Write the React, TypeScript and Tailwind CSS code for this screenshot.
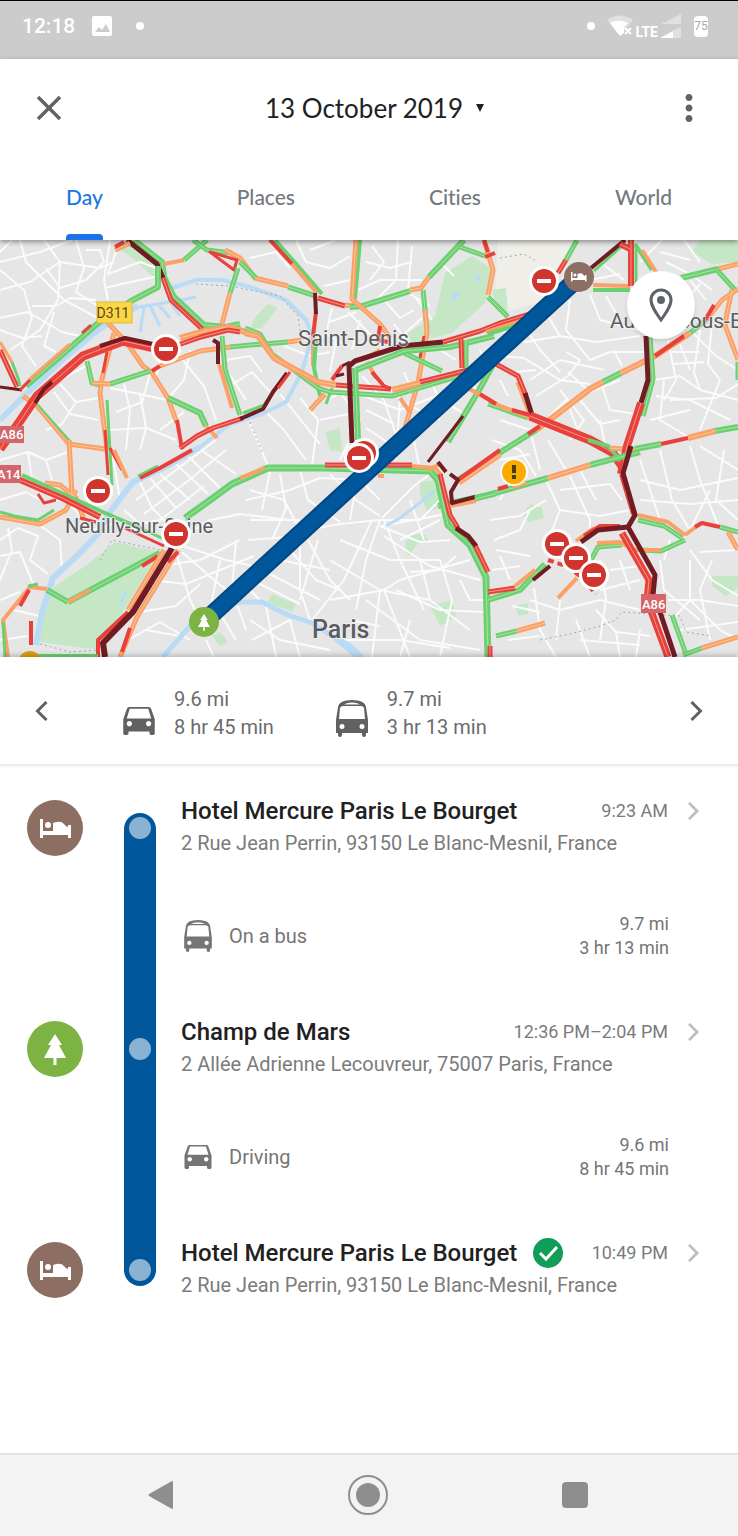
import type { ReactNode } from "react"
import { MdClose, MdMoreVert } from "react-icons/md"

const G = "#69d172"
const O = "#fba066"
const R = "#e8413b"
const D = "#701c22"

// minor streets, drawn in white under the traffic layer
const streets = [
  "M0 262 40 252 72 240M20 240 26 262 64 300 98 318M0 290 30 282 60 262 100 268 114 262",
  "M44 240 60 262 58 300 40 330 10 350M0 318 28 312 62 332 80 336M76 240 84 268 76 292 98 306",
  "M0 270 24 290 32 318 22 346 36 366M32 306 56 306 70 298 96 300M110 240 104 280 108 300",
  "M116 252 108 274 140 262 156 268M104 288 140 280 158 276M46 268 60 288 86 280 104 262",
  "M54 312 44 346 56 352M12 240 0 252M86 250 100 250 104 262M0 330 22 338 42 336",
  "M40 400 60 380 86 366M60 384 76 402 98 398M76 402 62 424 46 430M98 420 70 414 54 392",
  "M110 388 140 394 166 400M116 412 142 402 150 374M108 430 146 428 176 440M140 394 146 428 140 450",
  "M124 384 130 410 126 450M156 376 164 350M176 352 204 386 216 420M190 350 184 380 170 396",
  "M226 360 250 356 262 372M230 386 252 372 270 392M184 412 160 430M228 372 246 400",
  "M0 460 28 452 46 460 68 452M0 500 26 492 44 502 66 500M28 452 32 480M46 460 52 480",
  "M0 540 18 528 38 536 30 560 48 574M0 556 20 552 34 586M38 524 60 540 62 570M8 528 12 550 0 580",
  "M0 600 20 592M14 610 40 616M0 640 28 636M72 506 92 530 112 524M112 450 120 500",
  "M140 482 152 508 170 526M150 478 176 508M160 474 190 500M176 464 208 494M188 456 220 488M198 448 236 474",
  "M136 500 176 470 216 440M144 514 184 484 226 450M158 522 204 486M124 510 140 524 160 520",
  "M178 540 210 520 240 514 290 520M180 545 226 560 270 570M182 552 214 580 240 600M176 552 190 600 196 612",
  "M150 580 186 584 220 570 254 556M160 566 200 560 240 540M140 612 176 606 200 584M146 630 180 636",
  "M128 640 160 622 190 640M206 640 214 657M220 560 212 600 236 640M236 540 232 590 246 630",
  "M250 258 276 252 290 268M296 240 306 262 330 268 350 256M310 250 336 240M366 262 390 268 412 262",
  "M372 246 384 262 370 280M398 240 396 280 376 300M412 246 408 290M324 286 350 280M358 290 380 280 422 280",
  "M332 308 326 334 348 346M348 312 372 336M330 322 356 312M300 330 312 344M384 300 400 318 414 310M410 294 430 306",
  "M360 320 352 350M414 296 432 320M394 324 408 342M440 262 454 276M422 318 404 334",
  "M330 352 310 356 284 346M336 340 330 372M362 376 384 400 398 440M372 372 406 404 440 420M340 392 360 420 340 460",
  "M300 398 318 420 312 466M264 410 284 430 306 460M250 424 270 470M280 394 320 444M326 400 348 390M320 420 348 414",
  "M400 398 396 460M364 396 400 410 436 396M430 380 440 400 462 412M434 400 412 440M420 470 414 440",
  "M440 350 456 360M480 350 486 366M404 372 410 386M470 384 486 396M366 410 394 424M366 428 390 444",
  "M500 330 526 342 560 336 596 342 640 336M520 320 540 350 560 372M544 310 560 336M570 300 566 330 590 360",
  "M590 294 600 320 640 330M496 356 524 358 560 380 590 384M530 380 560 360 604 370M536 396 568 376 580 360 566 352",
  "M606 296 620 320M568 372 590 392 620 380M580 400 600 424 620 420M548 418 566 400 578 430M560 390 584 420 570 440",
  "M600 380 610 410 636 414M590 360 610 352 644 352M614 350 622 366M500 380 508 396M536 370 516 372",
  "M600 262 624 280M590 280 620 274M640 262 662 240M660 252 690 260M684 240 700 262M666 262 690 274 712 290",
  "M690 280 706 300M700 284 690 296M668 340 676 380 664 400M680 344 690 370M672 352 700 352M674 364 704 362",
  "M700 330 694 372 700 390M712 324 708 364 720 380M690 330 716 356 738 370M654 380 680 376 700 390 738 400",
  "M656 396 690 400 730 420M664 380 660 420 690 438M650 420 690 410M670 400 716 398 738 384M720 380 700 430",
  "M500 420 530 430 540 470M492 440 520 450 536 476M548 440 566 470M560 424 590 440M500 460 530 454M600 420 606 450",
  "M440 500 420 520 380 520 340 524 296 532M380 520 366 560 356 610M384 520 400 560 424 610M372 520 344 580 312 620",
  "M382 526 446 514M380 500 360 480 320 478M382 518 414 486 430 474M380 526 420 542 450 540M384 536 430 566 480 580",
  "M300 470 308 500 340 522M330 474 356 500 380 516M358 474 350 520M250 490 284 500 300 530M270 472 262 510",
  "M246 500 290 490 320 478M280 474 286 508 272 540M250 520 300 520M248 540 300 536M308 540 330 580 350 600",
  "M290 550 316 580 340 590M300 540 300 590 310 620M280 560 330 570M266 572 320 600M256 582 300 604M318 540 300 600",
  "M340 540 390 560 440 560M330 560 380 590 430 600M330 600 384 590 400 580 470 560M380 590 372 657M384 590 410 657",
  "M366 600 420 640 480 650M396 590 440 610 484 612M410 620 400 657M420 560 430 600 470 630M440 560 452 600 440 657",
  "M250 620 280 640 330 650M252 640 290 620M266 606 276 657M290 620 300 657M400 540 440 520M410 500 424 540",
  "M340 640 400 640 450 648M350 620 380 626M456 556 440 570 410 572M460 580 470 600 484 600M240 580 260 600",
  "M494 540 520 530 530 510M490 520 520 516 546 500M500 500 510 480M546 480 560 510 600 516 630 510M580 470 596 500",
  "M560 510 550 536M560 490 610 484 622 500M570 476 590 520 590 534M496 550 530 556M500 556 510 580M492 570 520 566",
  "M530 600 560 610 600 600 640 610M534 588 540 630 556 657M560 600 556 640M600 560 606 600 600 640M620 560 630 590",
  "M596 610 616 632 650 636M508 640 540 636M576 620 590 657M600 590 640 580M540 612 512 606M610 570 640 566",
  "M640 480 680 490 738 478M640 500 690 504 738 500M660 450 672 500 690 530M690 446 700 480 720 530M640 460 660 520",
  "M700 446 738 470M710 490 690 530M724 450 716 500 738 520M660 560 664 590 700 620M690 550 712 580 738 596",
  "M670 540 664 560M668 600 700 600 738 606M690 560 690 600 672 620M712 560 700 590 710 640M680 630 738 622",
  "M738 550 700 552M690 600 720 630 738 640M640 630 636 657M616 632 620 657M580 640 640 645",
]

const parks = [
  "M445 273 472 256 492 269 485 303 452 333 412 343 408 333 435 316Z",
  "M130 240 152 262 156 280 146 270 130 256 120 250Z",
  "M254 318 268 304 278 308 262 328 250 330Z",
  "M492 290 506 288 508 314 498 312Z",
  "M700 240H738V262L712 264 692 252Z",
  "M115 542 160 552 123 612 100 650 40 642 38 625 50 590 67 578 87 565Z",
  "M325 432 340 428 342 452 330 450Z",
  "M420 482 436 480 442 506 428 512 420 496Z",
  "M405 546Q408 532 424 534L430 542Q414 542 412 552L408 556Z",
  "M272 594 296 604 292 612 268 602Z",
  "M430 606 452 600 456 616 440 626Z",
  "M522 514 530 504 542 508 544 518 528 522Z",
  "M712 576 738 576V588L726 596 712 586Z",
  "M516 606 528 603 528 614 518 616Z",
  "M212 636 220 632 228 642 220 646Z",
]

const water = [
  { d: "M0 420 22 398 60 362 98 330 138 306", w: 6 },
  { d: "M133 308 170 302 196 297M144 308 140 332M150 306 160 326M158 304 170 318M170 302 180 316", w: 3 },
  { d: "M172 288 196 280 222 280 250 287 286 300 306 320 312 336 302 372 286 402 262 414 230 424 200 447", w: 4 },
  { d: "M200 447 165 467 133 482 110 512 97 535 80 553 53 578 42 612 36 645", w: 6 },
  { d: "M163 657 190 626 210 610 240 602 262 602 288 615 312 623 335 638 358 657", w: 5 },
  { d: "M386 526 400 518 434 492M120 606 126 592", w: 3 },
  { d: "M476 280 480 276M452 300 458 292M340 640 350 646 362 657", w: 5 },
]

// [colour, width, path]
const traffic: [string, number, string][] = [
  [G, 6, "M134 240 162 262 164 277 174 297 204 325 226 327 240 324"],
  [D, 5, "M127 240 157 264 163 278"],
  [R, 5, "M163 278 171 300 201 328V337"],
  [O, 5, "M115 250 130 243"],
  [R, 4, "M115 247 124 242"],
  [O, 4, "M164 264 184 260"],
  [G, 5, "M184 260 207 240"],
  [G, 6, "M158 266 158 287 131 301 97 324 62 355 26 386"],
  [O, 3, "M70 344 32 377 22 388"],
  [R, 3, "M82 333 91 325"],
  [G, 5, "M193 240 207 250 232 253"],
  [O, 5, "M225 250 240 258 255 278 288 286"],
  [R, 3, "M210 252 234 270 237 260Z"],
  [G, 5, "M238 268 230 293"],
  [O, 5, "M230 293 222 324"],
  [R, 5, "M0 350 17 387"],
  [O, 3, "M0 342 12 362"],
  [G, 3, "M12 362 18 378 20 386"],
  [D, 3, "M0 387 22 390"],
  [R, 3, "M20 390 30 380"],
  [O, 5, "M23 396 37 406 69 444 105 449"],
  [G, 2, "M37 404 70 441"],
  [O, 5, "M108 323 127 343 143 366 152 373 168 398 177 423"],
  [R, 4, "M177 420 182 449"],
  [O, 5, "M114 333 102 379 100 393 107 449"],
  [R, 3, "M107 352 103 373"],
  [R, 3, "M105 430 108 475"],
  [G, 3, "M107 400 112 485"],
  [G, 5, "M87 361 92 383 100 385M110 384 150 371"],
  [O, 5, "M92 383 110 384M160 366 200 351 230 347"],
  [R, 4, "M152 371 160 366"],
  [G, 5, "M230 347 250 345 288 342"],
  [O, 5, "M288 342 302 340"],
  [G, 6, "M168 398 200 413 206 426"],
  [O, 4, "M206 426 217 438"],
  [R, 5, "M180 448 197 436 213 428 243 418"],
  [G, 3, "M243 413 264 405 274 390"],
  [D, 4, "M240 419 263 409 273 392 287 373"],
  [R, 3, "M278 388 290 372"],
  [G, 5, "M222 336 225 369 240 415"],
  [O, 4, "M219 364 232 408"],
  [D, 4, "M213 340 218 343V364"],
  [R, 9, "M0 449 20 421 37 396 83 356 123 341 155 348"],
  [D, 4, "M100 346 125 338 153 344M35 403 44 389 52 382"],
  [O, 6, "M180 338 205 331 228 327 246 332"],
  [R, 5, "M178 345 201 337 228 330 240 332"],
  [G, 4, "M275 240 298 266 322 294"],
  [R, 4, "M270 240 292 264"],
  [O, 4, "M292 264 317 293"],
  [G, 5, "M240 262 256 278M288 287 316 296"],
  [R, 5, "M318 298 345 306"],
  [O, 5, "M345 305 356 306M410 290 421 288 429 277"],
  [G, 6, "M350 307 362 306 410 291M429 277 464 240"],
  [G, 4, "M360 240 355 299"],
  [O, 5, "M356 240 352 299 380 324 390 338"],
  [R, 4, "M316 312 313 336M380 326 378 340 388 342"],
  [O, 4, "M313 336 313 366"],
  [G, 4, "M316 340 314 368 320 396"],
  [D, 4, "M315 293 316 314"],
  [O, 5, "M310 410 325 394"],
  [G, 3, "M332 388 326 404"],
  [G, 5, "M423 290 427 329"],
  [O, 5, "M425 310 427 332 418 383 405 428"],
  [R, 3, "M424 336 420 358"],
  [G, 5, "M245 328 260 334 272 354 318 388 330 392 392 396 466 374"],
  [O, 6, "M245 333 258 336 274 358 318 382 336 385M392 390 420 383"],
  [R, 5, "M336 385 391 389M420 382 468 370"],
  [O, 4, "M367 362 376 378M366 358 380 350"],
  [R, 4, "M372 372 384 386 391 389M332 380 342 366"],
  [G, 5, "M402 352 442 371"],
  [G, 6, "M356 370 405 351 450 347 494 336"],
  [G, 6, "M355 368 358 440"],
  [D, 5, "M352 443 349 366 355 361 402 346 443 342"],
  [D, 3, "M336 376 344 374M342 366 350 362"],
  [R, 5, "M443 342 480 331 500 323 530 314"],
  [O, 4, "M486 332 530 318"],
  [G, 4, "M488 334 528 322 566 296"],
  [G, 5, "M466 340V368"],
  [R, 5, "M461 339 462 368"],
  [O, 4, "M400 398 410 412"],
  [G, 6, "M500 352 478 392 448 442"],
  [D, 3, "M463 416 428 462"],
  [O, 5, "M484 240 493 270 488 295"],
  [G, 5, "M488 297 508 317M460 247 485 256"],
  [R, 4, "M484 240 488 252M485 257 495 253"],
  [G, 5, "M577 240 566 260"],
  [R, 5, "M566 260 558 273M538 306 552 298"],
  [G, 3, "M624 244 594 271"],
  [D, 4, "M625 240 591 268"],
  [O, 4, "M593 285 630 286"],
  [G, 4, "M593 290 630 290"],
  [R, 6, "M631 240V286M620 244 630 249"],
  [G, 3, "M636 246V286"],
  [G, 4, "M635 244 652 270"],
  [O, 4, "M642 250 658 275"],
  [G, 6, "M681 278 718 269"],
  [O, 5, "M718 269 738 264"],
  [G, 5, "M716 269 736 291"],
  [O, 5, "M738 289 722 300 706 320M732 290 727 313 725 325 738 360"],
  [R, 4, "M704 322 714 305"],
  [G, 5, "M706 320 690 333M738 362V380"],
  [O, 6, "M690 333 655 356 621 373M603 382 590 389 560 412 536 430"],
  [R, 4, "M684 336 655 356"],
  [G, 6, "M621 373 603 382M536 430 504 450 458 480"],
  [G, 5, "M650 336 653 379 643 416"],
  [D, 5, "M646 336 648 380 641 403"],
  [O, 5, "M518 382 530 414"],
  [R, 5, "M494 363 518 376 526 396"],
  [D, 5, "M525 393 532 415"],
  [G, 5, "M488 404 528 418"],
  [O, 4, "M464 386 500 406 530 417"],
  [R, 4, "M480 394 496 404M512 410 530 415M528 434 540 426"],
  [R, 9, "M530 416 590 440 612 452 622 466"],
  [G, 4, "M588 440 608 446 622 462"],
  [O, 5, "M610 448 636 450"],
  [R, 8, "M641 403 627 446 621 474"],
  [G, 6, "M438 506 488 495 548 478M590 465 640 452M635 449 661 444M715 431 738 427"],
  [O, 6, "M548 478 590 465M688 438 715 431M512 486 526 482"],
  [R, 4, "M661 444 688 438M498 489 508 486"],
  [O, 4, "M245 480 267 468"],
  [G, 7, "M185 518 213 498 232 484 268 468 325 468 430 471 438 480 448 525 470 545 486 577 488 657"],
  [O, 4, "M240 478 265 468M410 466 435 468 442 476"],
  [R, 5, "M325 465 412 465M440 474 450 515 458 528M475 545 488 572M490 646V657"],
  [D, 5, "M456 528 468 536 476 546"],
  [O, 4, "M378 476H384M440 464 428 470M450 506 476 501"],
  [O, 5, "M459 483 500 455"],
  [R, 4, "M458 480 500 450"],
  [D, 4, "M438 462 446 472M450 474 458 480 451 492 452 503 475 497"],
  [G, 5, "M475 499 495 494"],
  [O, 5, "M69 440 72 495M0 517 40 524 66 510 76 490M45 483 60 485 76 498 84 520"],
  [R, 3, "M38 494 44 503 56 500M110 448 122 470"],
  [O, 4, "M114 450 127 478"],
  [G, 3, "M0 512 14 516 38 520 54 510"],
  [G, 4, "M22 475 105 513 140 528"],
  [R, 6, "M20 480 62 498 100 517"],
  [R, 3, "M80 518 96 522M125 528 164 546"],
  [G, 3, "M140 528 166 540"],
  [G, 3, "M138 476 158 466"],
  [R, 4, "M140 478 160 468 192 450"],
  [G, 6, "M68 602 160 553M47 590 68 602"],
  [O, 4, "M68 602 90 590M30 587 47 589M30 587 3 620 8 657"],
  [R, 4, "M142 566 158 556M20 606 29 590M31 621V645"],
  [G, 3, "M3 622 5 657M28 586 38 584"],
  [O, 5, "M164 550 128 610"],
  [O, 5, "M178 550 137 617 120 657"],
  [R, 4, "M128 612 98 640V657M168 562 178 552M130 628 122 652"],
  [D, 6, "M172 548 133 612 103 643 105 657"],
  [G, 4, "M38 656H98"],
  [R, 6, "M622 474 634 514"],
  [O, 4, "M627 490 636 516"],
  [O, 4, "M576 541 594 528"],
  [R, 4, "M584 536 600 526H620"],
  [G, 5, "M638 520 664 526 682 538M685 540 661 551 640 550M591 560 598 547 622 545"],
  [O, 4, "M638 515 668 522 685 535M661 550 635 550 620 542 597 543M685 535 701 523"],
  [R, 4, "M695 527 702 523 720 527"],
  [G, 5, "M720 527 738 532"],
  [O, 5, "M728 532 738 550"],
  [R, 7, "M622 533 649 580 647 600 668 657"],
  [D, 5, "M631 446 623 473 635 515 628 527 598 530 581 542M628 527 655 575 653 595 660 612 675 657"],
  [G, 6, "M488 600 520 590 545 564"],
  [O, 4, "M515 586 535 570"],
  [R, 5, "M488 592 515 588"],
  [D, 4, "M533 580 550 566"],
  [G, 5, "M496 636 517 631"],
  [O, 5, "M517 631 545 623"],
  [O, 4, "M558 598 577 578"],
  [G, 5, "M672 615 686 654"],
  [G, 5, "M683 655 702 648"],
  [O, 5, "M702 648 738 637"],
]

const closures = [
  [166, 349], [544, 281], [364, 453], [359, 458], [98, 491], [176, 534], [557, 544], [576, 558], [594, 575],
]

const BedShape = () => (
  <>
    <path d="M0 0h3v12h10V4q8-3 11 1 2 3 4 3V6h3v13h-3v-3H3v3H0z" />
    <circle cx="8" cy="6" r="3" />
  </>
)

const TreeShape = () => <path d="M11 0 4 11h3L0 24h9.500v7h3v-7H22L15 11h3z" />

function TrafficMap() {
  return (
    <svg viewBox="0 240 738 417" className="block h-auto w-full bg-[#e6e6e6] font-[Roboto,sans-serif]" role="img" aria-label="Map of the day's route">
      <path d="M498 240H575L560 262 548 300 505 312 495 300Z" fill="#f0eee8" />
      <g fill="#c6e7c5">
        {parks.map((d) => <path key={d} d={d} />)}
      </g>
      <g fill="none" stroke="#fbfbfb" strokeWidth="2" strokeLinejoin="round">
        {streets.map((d) => <path key={d} d={d} />)}
      </g>
      <g fill="none" stroke="#b9dbf6" strokeLinejoin="round">
        {water.map(({ d, w }) => <path key={d} d={d} strokeWidth={w} />)}
      </g>
      <g fill="none" stroke="#a3a8ad" strokeWidth="1" strokeDasharray="2 3">
        <path d="M500 258 524 254 538 262M100 560 112 540 160 550M40 644 70 652 100 650M540 640 570 634 600 626 616 620 622 612 680 616 686 632 712 636M250 422 262 452M196 284 230 286 280 296 298 316 302 344" />
      </g>
      <g fill="none" strokeLinejoin="round">
        {traffic.map(([color, width, d], i) => (
          <g key={i}>
            <path d={d} stroke={color} strokeWidth={width} />
            {width > 4 && color !== D && <path d={d} stroke="#ffe9c9" strokeOpacity="0.5" strokeWidth="1" />}
          </g>
        ))}
        <path d="M548 560 566 566 580 576 596 594" stroke={R} strokeWidth="4" strokeDasharray="6 4" />
      </g>

      <rect x="97" y="302" width="35" height="21" fill="#fbd646" stroke="#e0b93a" />
      <text x="113" y="318" fontSize="14" fill="#5b4a1b" textAnchor="middle">D311</text>
      <g fill="#d4666b">
        <rect x="-1" y="426" width="25" height="17" />
        <rect x="-1" y="465" width="22" height="18" />
        <rect x="641" y="594" width="25" height="19" />
      </g>
      <g fill="#fff" fontSize="13" fontWeight="500">
        <text x="0" y="439">A86</text>
        <text x="-3" y="479">A14</text>
        <text x="642" y="609">A86</text>
      </g>
      <g fill="#5a5c5f" stroke="#f4f4f4" strokeWidth="2" paintOrder="stroke" strokeOpacity="0.6">
        <text x="298" y="346" fontSize="22">Saint-Denis</text>
        <text x="65" y="533" fontSize="20">Neuilly-sur-Seine</text>
        <text x="610" y="328" fontSize="21">Aulnay-sous-Bois</text>
        <text x="312" y="638" fontSize="25" fontWeight="500">Paris</text>
      </g>

      <path d="M576 280 207 619" stroke="#014884" strokeWidth="18" />
      <path d="M576 280 207 619" stroke="#01579b" strokeWidth="14" />

      {closures.map(([x, y]) => (
        <g key={x} transform={`translate(${x} ${y})`}>
          <circle r="15" fill="#fff" />
          <circle r="12" fill="#d0342c" />
          <rect x="-7" y="-2" width="14" height="4" fill="#fff" />
        </g>
      ))}
      <g transform="translate(514 472)">
        <circle r="14" fill="#fff" fillOpacity="0.8" />
        <circle r="12" fill="#f9ab00" />
        <path d="M-2-7h4v8h-4zM-2 3h4v4h-4z" fill="#4a3a10" />
      </g>
      <circle cx="30" cy="663" r="12" fill="#dba013" />
      <circle cx="579" cy="277" r="15" fill="#8d6e63" />
      <g transform="translate(571 272) scale(0.5)" fill="#fff"><BedShape /></g>
      <circle cx="204" cy="622" r="15" fill="#7cb342" />
      <g transform="translate(198 614) scale(0.54)" fill="#fff"><TreeShape /></g>
    </svg>
  )
}

const CarIcon = ({ className }: { className: string }) => (
  <svg viewBox="3 5 18 16" className={className} fill="currentColor" aria-hidden="true">
    <path
      fillRule="evenodd"
      d="M18.920 6.010C18.720 5.420 18.160 5 17.500 5h-11c-.660 0-1.210.420-1.420 1.010L3 12v8c0 .550.450 1 1 1h1c.550 0 1-.450 1-1v-1h12v1c0 .550.450 1 1 1h1c.550 0 1-.450 1-1v-8l-2.080-5.990zM6.500 16c-.830 0-1.500-.670-1.500-1.500S5.670 13 6.500 13s1.500.670 1.500 1.500S7.330 16 6.500 16zm11 0c-.830 0-1.500-.670-1.500-1.500s.670-1.500 1.500-1.500 1.500.670 1.500 1.500-.670 1.500-1.500 1.500zM5 11.500 6.700 6h10.600L19 11.500z"
    />
  </svg>
)

const BusIcon = ({ className }: { className: string }) => (
  <svg viewBox="0 0 32 37" className={className} fill="currentColor" aria-hidden="true">
    <path
      fillRule="evenodd"
      d="M0 20 2 7Q3 0 16 0T30 7L32 20V33H30V35Q30 37 28 37T26 35V33H6V35Q6 37 4 37T2 35V33H0ZM3 19H29L28 8Q27 6 25 6H7Q5 6 4 8ZM8 4.500H24Q21 2.500 16 2.500T8 4.500ZM6 24a2.500 2.500 0 1 0 0 5a2.500 2.500 0 1 0 0-5ZM26 24a2.500 2.500 0 1 0 0 5a2.500 2.500 0 1 0 0-5Z"
    />
  </svg>
)

const Chevron = ({ left = false, className }: { left?: boolean; className: string }) => (
  <svg viewBox="0 0 12 20" className={className} fill="none" stroke="currentColor" strokeWidth="3" aria-hidden="true">
    <path d={left ? "M11 1 2 10l9 9" : "M1 1l9 9-9 9"} />
  </svg>
)

function StatusBar() {
  return (
    <div className="flex h-[59px] items-start border-t border-black bg-[#cccccc] pl-[22px] pr-[30px] pt-[13px] text-white">
      <div className="flex h-6 items-center">
        <span className="text-[21px] font-medium leading-6">12:18</span>
        <svg viewBox="0 0 20 20" className="ml-[17px] size-5" aria-hidden="true">
          <rect width="20" height="20" rx="2" fill="#fff" />
          <path d="M3 16 7 11l3 3 4-6 4 8z" fill="#ccc" />
        </svg>
        <span className="ml-6 size-2 rounded-full bg-white" />
      </div>
      <div className="ml-auto flex h-6 items-center">
        <span className="mr-3 size-2 rounded-full bg-white" />
        <svg viewBox="0 0 26 22" className="h-[22px] w-[26px]" aria-hidden="true">
          <path d="M0 5Q13-4 26 5L13 21z" fill="#fff" fillOpacity="0.4" />
          <path d="M3 8Q12 3 21 8L17 12V18L13 21z" fill="#fff" />
          <path d="m18 13 6 6m0-6-6 6" stroke="#fff" strokeWidth="2" />
        </svg>
        <span className="mx-[2px] pt-3 text-[14px] font-bold leading-4">LTE</span>
        <svg viewBox="0 0 21 24" className="h-6 w-[21px]" aria-hidden="true">
          <path d="M1 10 21 0V10zM12 17 21 13V24H12z" fill="#fff" fillOpacity="0.4" />
          <path d="M0 24 13 17V24z" fill="#fff" />
        </svg>
        <span className="ml-[13px] flex h-[21px] w-[14px] items-center justify-center rounded-sm bg-white text-[12px] leading-3 text-[#aaaaaa]">75</span>
      </div>
    </div>
  )
}

const tabs = ["Day", "Places", "Cities", "World"]

function Header() {
  return (
    <header className="relative z-10 bg-white font-[Lato,sans-serif] shadow-[0_2px_5px_rgba(0,0,0,0.4)] [font-variant-ligatures:none]">
      <div className="flex h-[98px] items-center justify-between px-7 text-[#5f6368]">
        <button type="button" aria-label="Close"><MdClose size={42} /></button>
        <button type="button" className="flex items-center gap-3 pl-3 text-[26px] leading-8 text-[#202124]">
          13 October 2019
          <svg viewBox="0 0 10 10" className="size-[10px]" fill="currentColor" aria-hidden="true"><path d="M1 1h8L5 9z" /></svg>
        </button>
        <button type="button" aria-label="More options"><MdMoreVert size={42} /></button>
      </div>
      <nav className="flex h-[83px] justify-between px-[66px] text-[21px] font-medium text-[#75797e]">
        {tabs.map((tab) => (
          <button
            key={tab}
            type="button"
            className={tab === "Day" ? "flex h-full flex-col justify-between pt-[26px] text-[#1a73e8]" : "flex h-full flex-col pt-[26px]"}
          >
            <span className="leading-[27px]">{tab}</span>
            {tab === "Day" && <span className="h-[6px] w-full rounded-t bg-[#1a73e8]" />}
          </button>
        ))}
      </nav>
    </header>
  )
}

function Summary() {
  return (
    <section className="relative flex h-[109px] items-center border-b-2 border-[#eeeeee] bg-white px-[35px] text-[20px] leading-7 text-[#6b6b6b] shadow-[0_-2px_5px_rgba(0,0,0,0.2)]">
      <button type="button" aria-label="Previous" className="text-[#616161]"><Chevron left className="h-5 w-[13px]" /></button>
      <div className="ml-[75px] flex items-end gap-[19px] pt-1">
        <CarIcon className="mb-[6px] h-7 w-8 text-[#616161]" />
        <p>9.6 mi<br />8 hr 45 min</p>
      </div>
      <div className="ml-[62px] flex items-end gap-[19px] pt-1">
        <BusIcon className="mb-1 h-[37px] w-8 text-[#616161]" />
        <p>9.7 mi<br />3 hr 13 min</p>
      </div>
      <button type="button" aria-label="Next" className="ml-auto text-[#616161]"><Chevron className="h-5 w-[13px]" /></button>
    </section>
  )
}

type Stop = {
  kind: "hotel" | "park"
  name: string
  address: string
  time: string
  confirmed?: boolean
  leg?: { icon: ReactNode; label: string; distance: string; duration: string }
}

const stops: Stop[] = [
  {
    kind: "hotel",
    name: "Hotel Mercure Paris Le Bourget",
    address: "2 Rue Jean Perrin, 93150 Le Blanc-Mesnil, France",
    time: "9:23 AM",
    leg: { icon: <BusIcon className="h-8 w-7" />, label: "On a bus", distance: "9.7 mi", duration: "3 hr 13 min" },
  },
  {
    kind: "park",
    name: "Champ de Mars",
    address: "2 Allée Adrienne Lecouvreur, 75007 Paris, France",
    time: "12:36 PM–2:04 PM",
    leg: { icon: <CarIcon className="h-6 w-7" />, label: "Driving", distance: "9.6 mi", duration: "8 hr 45 min" },
  },
  {
    kind: "hotel",
    name: "Hotel Mercure Paris Le Bourget",
    address: "2 Rue Jean Perrin, 93150 Le Blanc-Mesnil, France",
    time: "10:49 PM",
    confirmed: true,
  },
]

function StopRow({ stop, first, last }: { stop: Stop; first: boolean; last: boolean }) {
  const rail = first ? "mt-[18px] rounded-t-full pt-1" : last ? "self-start rounded-b-full pb-[5px] pt-[22px]" : "pt-[22px]"

  return (
    <li className="flex">
      <div className={`mt-[5px] flex size-14 shrink-0 items-center justify-center rounded-full text-white ${stop.kind === "hotel" ? "bg-[#8d6e63]" : "bg-[#7cb342]"}`}>
        {stop.kind === "hotel" ? (
          <svg viewBox="0 0 31 19" className="h-[19px] w-[31px]" fill="currentColor" aria-hidden="true"><BedShape /></svg>
        ) : (
          <svg viewBox="0 0 22 31" className="h-[31px] w-[22px]" fill="currentColor" aria-hidden="true"><TreeShape /></svg>
        )}
      </div>
      <div className={`ml-[41px] w-8 shrink-0 bg-[#01579b] ${rail}`}>
        <span className="mx-auto block size-[22px] rounded-full bg-[#8ab3d3]" />
      </div>
      <div className="ml-[25px] min-w-0 flex-1">
        <div className="flex h-8 items-center">
          <h2 className="text-[24px] font-medium leading-8 text-[#212121]">{stop.name}</h2>
          {stop.confirmed && (
            <svg viewBox="0 0 30 30" className="ml-4 size-[30px]" aria-label="Confirmed">
              <circle cx="15" cy="15" r="15" fill="#0f9d58" />
              <path d="m7 15 6 6L24 9" fill="none" stroke="#fff" strokeWidth="3" />
            </svg>
          )}
          <span className="ml-auto text-[18px] leading-6 text-[#7b7b7b]">{stop.time}</span>
          <a href="#stop" aria-label={`Open ${stop.name}`} className="ml-5 text-[#bdbdbd]"><Chevron className="h-[18px] w-[11px]" /></a>
        </div>
        <p className="text-[20px] leading-8 text-[#7b7b7b]">{stop.address}</p>
        {stop.leg && (
          <div className="flex items-center pb-14 pl-[3px] pr-[30px] pt-[53px] text-[#757575]">
            {stop.leg.icon}
            <span className="ml-[17px] text-[20px] leading-8">{stop.leg.label}</span>
            <p className="ml-auto text-right text-[18px] leading-6">{stop.leg.distance}<br />{stop.leg.duration}</p>
          </div>
        )}
      </div>
    </li>
  )
}

export default function App() {
  return (
    <div className="flex min-h-screen flex-col bg-white font-[Roboto,sans-serif]">
      <StatusBar />
      <Header />
      <div className="relative">
        <TrafficMap />
        <button
          type="button"
          aria-label="Show places"
          className="absolute right-[43px] top-[31px] flex size-[68px] items-center justify-center rounded-full bg-white text-[#5f6368] shadow-md"
        >
          <svg viewBox="0 0 24 34" className="h-[34px] w-6" fill="none" aria-hidden="true">
            <path d="M12 32C7 25 2 18 2 12a10 10 0 0 1 20 0c0 6-5 13-10 20z" stroke="currentColor" strokeWidth="3" />
            <circle cx="12" cy="12" r="4" fill="currentColor" />
          </svg>
        </button>
      </div>
      <Summary />
      <main className="flex-1 pb-10 pl-[27px] pr-[39px] pt-[29px]">
        <ol>
          {stops.map((stop, i) => (
            <StopRow key={i} stop={stop} first={i === 0} last={i === stops.length - 1} />
          ))}
        </ol>
      </main>
      <div className="grid h-[83px] grid-cols-3 place-items-center border-t-2 border-[#e4e4e4] bg-[#f3f3f3] pb-[2px] pl-[57px] pr-[60px] text-[#8e8e8e]">
        <button type="button" aria-label="Back">
          <svg viewBox="0 0 26 28" className="h-7 w-[26px]" fill="currentColor"><path d="M1 13 24 0q1 0 1 1v26q0 1-1 1L1 15q-1-1 0-2z" /></svg>
        </button>
        <button type="button" aria-label="Home">
          <svg viewBox="0 0 40 40" className="size-10" fill="none">
            <circle cx="20" cy="20" r="19" stroke="currentColor" strokeWidth="2" />
            <circle cx="20" cy="20" r="12" fill="currentColor" />
          </svg>
        </button>
        <button type="button" aria-label="Recent apps"><span className="block size-[26px] rounded-sm bg-[#8e8e8e]" /></button>
      </div>
    </div>
  )
}
